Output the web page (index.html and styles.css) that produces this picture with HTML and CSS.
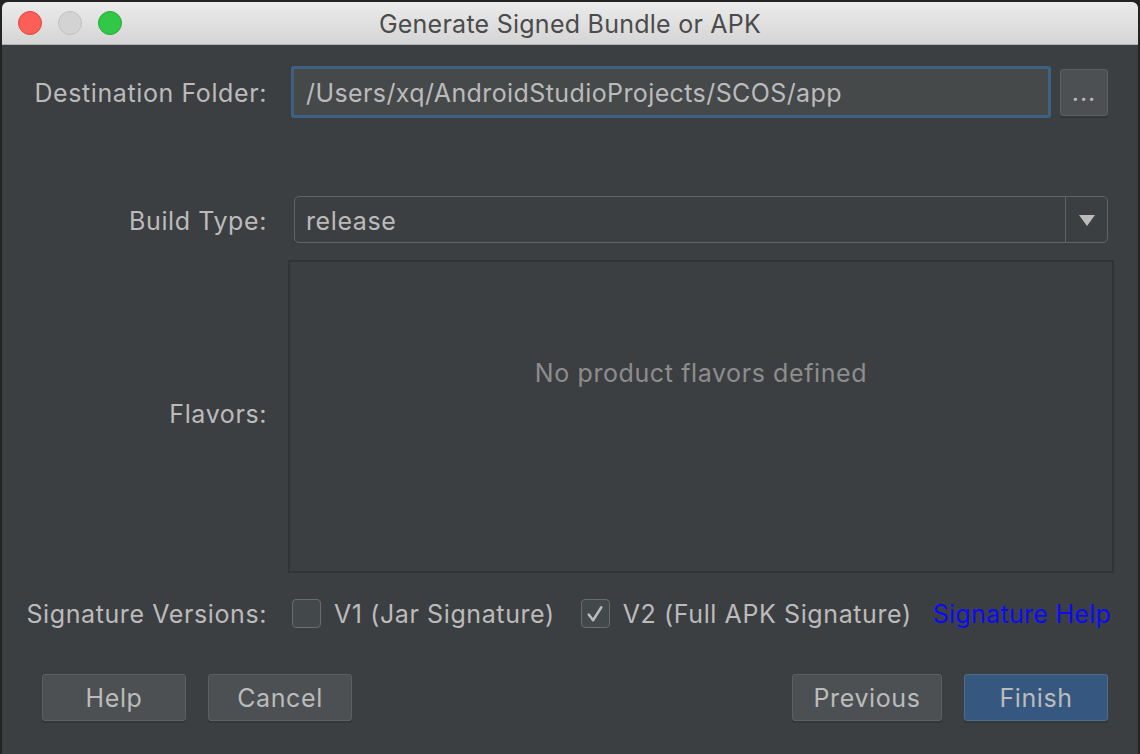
FILE: index.html
```html
<!DOCTYPE html>
<html>
<head>
<meta charset="utf-8">
<link rel="stylesheet" href="styles.css">
</head>
<body>
<div class="window">
  <div class="titlebar">
    <div class="lights">
      <span class="light red"></span>
      <span class="light gray"></span>
      <span class="light green"></span>
    </div>
    <div class="title">Generate Signed Bundle or APK</div>
  </div>
  <div class="content">
    <div class="row row-dest">
      <label class="label">Destination Folder:</label>
      <div class="field-line">
        <div class="textfield">/Users/xq/AndroidStudioProjects/SCOS/app</div>
        <div class="btn browse">...</div>
      </div>
    </div>
    <div class="row row-build">
      <label class="label">Build Type:</label>
      <div class="combo">
        <div class="combo-value">release</div>
        <div class="combo-arrow">
          <svg width="16" height="11" viewBox="0 0 16 11"><polygon points="0,0 16,0 8,11" fill="#bbbbbb"/></svg>
        </div>
      </div>
    </div>
    <div class="row row-flavors">
      <label class="label label-flavors">Flavors:</label>
      <div class="flavors">
        <div class="empty">No product flavors defined</div>
      </div>
    </div>
    <div class="row row-sig">
      <label class="label">Signature Versions:</label>
      <div class="sig-options">
        <span class="checkbox"></span>
        <span class="opt">V1 (Jar Signature)</span>
        <span class="checkbox checked">
          <svg width="28" height="28" viewBox="0 0 28 28"><polyline points="7,14.5 11.5,20.5 20,7" fill="none" stroke="#bbbbbb" stroke-width="2.6" stroke-linecap="round" stroke-linejoin="round"/></svg>
        </span>
        <span class="opt">V2 (Full APK Signature)</span>
        <a class="link">Signature Help</a>
      </div>
    </div>
    <div class="buttons">
      <div class="group">
        <div class="btn action">Help</div>
        <div class="btn action">Cancel</div>
      </div>
      <div class="group">
        <div class="btn action wide">Previous</div>
        <div class="btn action primary">Finish</div>
      </div>
    </div>
  </div>
</div>
</body>
</html>
```
FILE: styles.css
```css
* { box-sizing: border-box; }
html, body { margin: 0; padding: 0; }
body {
  width: 1140px;
  height: 754px;
  background: #232422;
  font-family: Inter, "Noto Sans", "Liberation Sans", sans-serif;
  overflow: hidden;
}
.window {
  margin: 2px 2px 0 2px;
  width: 1136px;
  height: 752px;
  background: #3c3f41;
  border-radius: 6px 6px 0 0;
  overflow: hidden;
  display: flex;
  flex-direction: column;
}
.titlebar {
  height: 43px;
  flex: none;
  background: linear-gradient(#ebebeb, #d5d5d5);
  border-bottom: 1px solid #b1b1b1;
  display: flex;
  align-items: center;
  position: relative;
}
.lights {
  display: flex;
  gap: 16px;
  padding-left: 16px;
}
.light {
  width: 24px;
  height: 24px;
  border-radius: 50%;
  display: block;
}
.red { background: #fc5f57; border: 1px solid #e0443e; }
.gray { background: #d3d3d3; border: 1px solid #c0c0c0; }
.green { background: #33c748; border: 1px solid #27aa35; }
.title {
  position: absolute;
  left: 0;
  right: 0;
  top: 0;
  bottom: 0;
  display: flex;
  align-items: center;
  justify-content: center;
  color: #4b4b4b;
  font-size: 25px;
  letter-spacing: 0.25px;
  padding-top: 1px;
}
.content {
  padding: 0 24px 0 20px;
  display: flex;
  flex-direction: column;
  color: #bbbbbb;
  font-size: 25px;
  letter-spacing: 0.6px;
}
.row {
  display: grid;
  grid-template-columns: 245px 1fr;
  column-gap: 21px;
  align-items: center;
}
.label {
  text-align: right;
  white-space: nowrap;
  color: #bbbbbb;
  padding-top: 1px;
}
.row-dest { margin-top: 21px; height: 52px; }
.row-build { margin-top: 78px; height: 47px; }
.row-build .label { padding-top: 2px; }
.row-flavors { margin-top: 17px; height: 313px; }
.label-flavors { padding-bottom: 6px; }
.row-sig { margin-top: 25px; height: 30px; }
.field-line {
  display: flex;
  align-items: center;
  height: 52px;
}
.textfield {
  margin-left: 3px;
  width: 760px;
  height: 52px;
  border: 3px solid #3d6185;
  border-radius: 3px;
  background: #45494a;
  padding-left: 12px;
  padding-top: 1px;
  display: flex;
  align-items: center;
  color: #bbbbbb;
  white-space: nowrap;
  letter-spacing: 0.4px;
}
.btn {
  background: #4c5052;
  border: 1px solid #5e6060;
  border-radius: 3px;
  box-shadow: 0 2px 0 #343638;
  color: #bbbbbb;
  display: flex;
  align-items: center;
  justify-content: center;
}
.browse {
  margin-left: 9px;
  width: 48px;
  height: 47px;
  margin-top: 1px;
  padding-bottom: 2px;
  letter-spacing: 1px;
}
.combo {
  margin-left: 6px;
  height: 47px;
  border: 1px solid #646464;
  border-radius: 5px;
  display: flex;
  margin-right: 6px;
}
.combo-value {
  flex: 1;
  display: flex;
  align-items: center;
  padding-left: 11px;
  padding-top: 2px;
  border-right: 1px solid #646464;
}
.combo-arrow {
  width: 41px;
  display: flex;
  align-items: center;
  justify-content: center;
  padding-left: 1px;
  padding-top: 2px;
}
.flavors {
  height: 313px;
  border: 2px solid #313335;
  padding-top: 96px;
  display: flex;
  justify-content: center;
  align-items: flex-start;
}
.empty {
  color: #8d8d8d;
  line-height: 30px;
}
.sig-options {
  display: flex;
  align-items: center;
  margin-left: 4px;
}
.checkbox {
  width: 29px;
  height: 29px;
  border: 1px solid #6b6b6b;
  border-radius: 4px;
  background: #43494a;
  display: flex;
  align-items: center;
  justify-content: center;
  flex: none;
}
.opt {
  margin-left: 13px;
  margin-right: 26px;
  white-space: nowrap;
}
.link {
  color: #0a0aff;
  margin-left: -5px;
  white-space: nowrap;
  letter-spacing: 0.3px;
}
.buttons {
  margin-top: 46px;
  margin-left: 20px;
  margin-right: 6px;
  display: flex;
  justify-content: space-between;
}
.group {
  display: flex;
  gap: 22px;
}
.action {
  width: 144px;
  height: 47px;
}
.action.wide { width: 150px; }
.primary {
  background: #365880;
  border-color: #4c708c;
}
```
